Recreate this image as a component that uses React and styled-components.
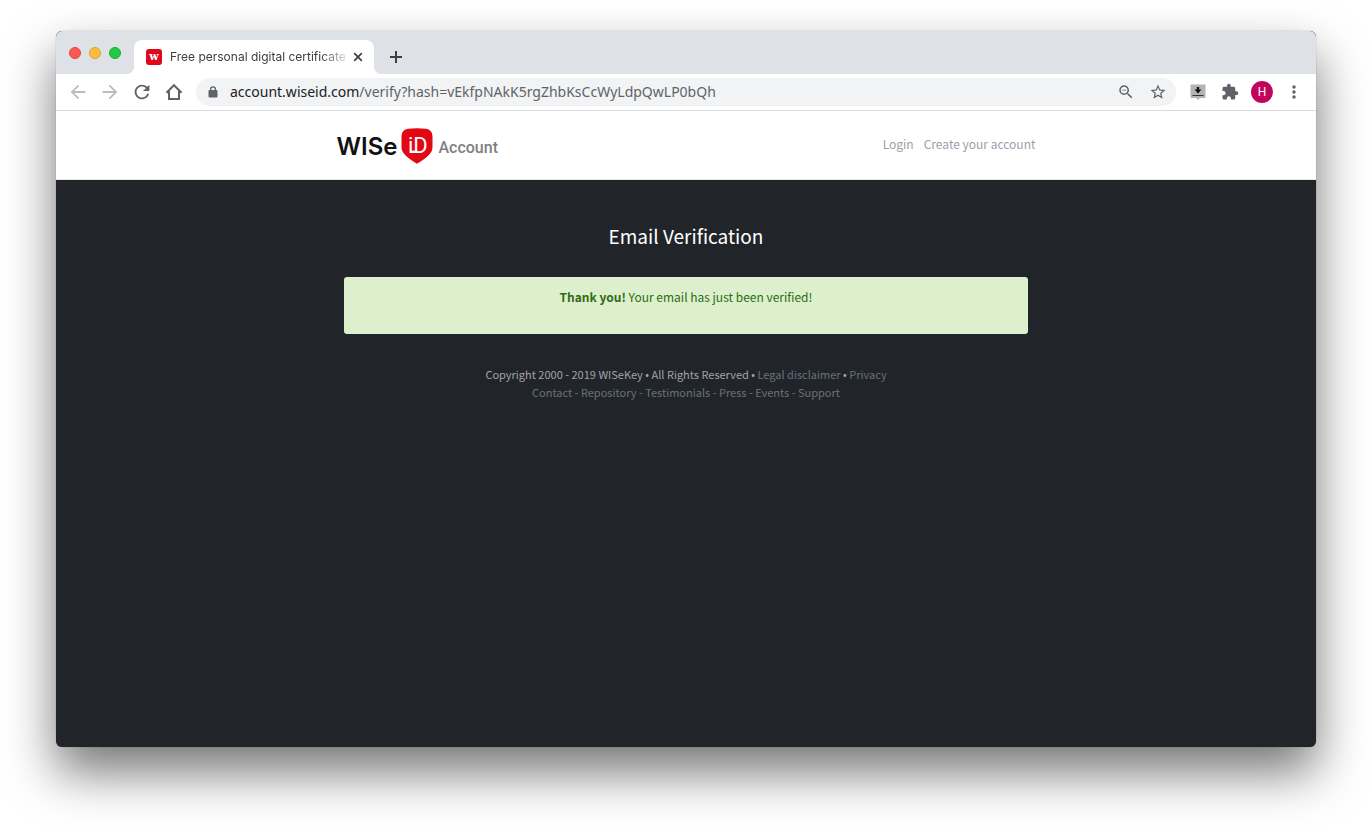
import React from 'react';
import styled, { createGlobalStyle } from 'styled-components';
import {
  MdArrowBack,
  MdArrowForward,
  MdRefresh,
  MdOutlineZoomOut,
  MdStarBorder,
  MdExtension,
  MdMoreVert,
} from 'react-icons/md';

const GlobalStyle = createGlobalStyle`
  * {
    box-sizing: border-box;
  }

  body {
    margin: 0;
    background: #ffffff;
    font-family: 'Noto Sans CJK JP', 'Noto Sans', sans-serif;
  }

  a {
    text-decoration: none;
  }
`;

const Button = styled.button`
  padding: 0;
  border: none;
  background: none;
  cursor: pointer;
`;

const Desktop = styled.div`
  display: flex;
  min-height: 100vh;
  padding: 31px 56px 80px;
  overflow: hidden;
`;

const Window = styled.div`
  display: flex;
  flex-direction: column;
  flex: 1;
  min-width: 0;
  border-radius: 6px;
  background: #212529;
  box-shadow: 0 0 1px rgba(0, 0, 0, 0.5), 0 25px 50px rgba(0, 0, 0, 0.54);
`;

const TabStrip = styled.div`
  display: flex;
  align-items: flex-end;
  height: 43px;
  padding-left: 13px;
  border-radius: 6px 6px 0 0;
  background: #dee1e6;
`;

const WindowControls = styled.div`
  display: flex;
  gap: 8px;
  margin-right: 13px;
  padding-bottom: 15px;
`;

const Light = styled(Button)`
  width: 12px;
  height: 12px;
  border: 1px solid ${({ $edge }) => $edge};
  border-radius: 50%;
  background: ${({ $color }) => $color};
`;

const Tab = styled.div`
  position: relative;
  display: flex;
  align-items: center;
  width: 240px;
  height: 34px;
  padding: 0 9px 0 12px;
  border-radius: 8px 8px 0 0;
  background: #ffffff;

  &::before,
  &::after {
    content: '';
    position: absolute;
    bottom: 0;
    width: 8px;
    height: 8px;
  }

  &::before {
    left: -8px;
    background: radial-gradient(circle at 0 0, transparent 8px, #ffffff 8px);
  }

  &::after {
    right: -8px;
    background: radial-gradient(circle at 100% 0, transparent 8px, #ffffff 8px);
  }
`;

const Favicon = styled.span`
  width: 16px;
  height: 16px;
  margin-right: 8px;
  border-radius: 3px;
  background: #e2061c;
  color: #ffffff;
  font-family: 'DejaVu Serif', serif;
  font-size: 11px;
  font-weight: 700;
  line-height: 15px;
  text-align: center;
`;

const TabTitle = styled.span`
  flex: 1;
  min-width: 0;
  color: #3c4043;
  font-family: Inter, sans-serif;
  font-size: 12px;
  line-height: 18px;
  white-space: nowrap;
  mask-image: linear-gradient(to right, #000 85%, rgba(0, 0, 0, 0.15));
`;

const TabButton = styled(Button)`
  display: flex;
  margin-left: 4px;
  color: #3c4043;
`;

const NewTabButton = styled(TabButton)`
  margin-left: 13px;
  padding-bottom: 8px;
`;

const Toolbar = styled.div`
  display: flex;
  align-items: center;
  height: 37px;
  padding: 0 12px;
  border-bottom: 1px solid #d9dadc;
  background: #ffffff;
`;

const ToolButtons = styled.div`
  display: flex;
  align-items: center;
  gap: 12px;
`;

const ToolButton = styled(Button)`
  display: flex;
  justify-content: center;
  width: 20px;
  color: ${({ disabled }) => (disabled ? '#babcbe' : '#5f6368')};

  & > svg {
    flex-shrink: 0;
  }
`;

const AddressBar = styled.div`
  display: flex;
  align-items: center;
  flex: 1;
  gap: 12px;
  height: 28px;
  margin: 0 12px;
  padding: 0 8px 0 12px;
  border-radius: 14px;
  background: #f1f3f4;
  color: #5f6368;
`;

const Url = styled.div`
  flex: 1;
  color: #5f6368;
  font-family: 'Noto Sans', sans-serif;
  font-size: 14px;
  line-height: 20px;

  & > span {
    color: #202124;
  }
`;

const Avatar = styled(Button)`
  width: 22px;
  height: 22px;
  margin: 0 -1px;
  border-radius: 50%;
  background: #c2055c;
  color: #ffffff;
  font-family: Roboto, sans-serif;
  font-size: 12px;
  line-height: 22px;
`;

const Header = styled.header`
  height: 69px;
  border-bottom: 1px solid #e4e6e8;
  background: #ffffff;
`;

const HeaderInner = styled.div`
  display: flex;
  align-items: center;
  justify-content: space-between;
  max-width: 699px;
  height: 100%;
  margin: 0 auto;
`;

const Brand = styled.a`
  display: flex;
  align-items: center;
  gap: 4px;
  padding-top: 2px;
  color: #111111;
`;

const BrandName = styled.span`
  padding-top: 2px;
  font-family: Inter, sans-serif;
  font-size: 24px;
  font-weight: 600;
  line-height: 30px;
`;

const BrandSection = styled.span`
  padding: 4px 0 0 1px;
  color: #808080;
  font-family: Roboto, sans-serif;
  font-size: 16px;
  font-weight: 500;
  line-height: 20px;
`;

const Nav = styled.nav`
  display: flex;
  gap: 10px;
  padding-bottom: 2px;

  & > a {
    color: #9a9fac;
    font-size: 12px;
    line-height: 20px;
  }
`;

const Content = styled.main`
  width: 100%;
  max-width: 684px;
  margin: 0 auto;
  padding-top: 40px;
  text-align: center;
`;

const Title = styled.h1`
  margin: 0 0 26px;
  color: #ffffff;
  font-size: 19px;
  font-weight: 400;
  line-height: 31px;
`;

const Alert = styled.div`
  height: 57px;
  padding-top: 10px;
  border-radius: 3px;
  background: #dcf0ce;
  color: #316b12;
  font-size: 12px;
  line-height: 20px;

  & > strong {
    font-weight: 700;
  }
`;

const Footer = styled.footer`
  padding-top: 31px;
  color: #a0a4ab;
  font-size: 11px;
  line-height: 18px;
  text-align: center;

  a,
  p + p {
    color: #6a7080;
  }

  p {
    margin: 0;
  }
`;

const links = ['Contact', 'Repository', 'Testimonials', 'Press', 'Events', 'Support'];

function Shield() {
  return (
    <svg width="32" height="36" viewBox="0 0 32 36" aria-hidden="true">
      <path
        d="M7 0.8Q16 -0.2 25 0.8Q31 1.5 31.5 8V19C31.5 26 25 30 16 35.8C7 30 0.5 26 0.5 19V8Q1 1.5 7 0.8Z"
        fill="#e30613"
      />
      <text x="7" y="25" fill="#ffffff" fontFamily="Roboto, sans-serif" fontSize="22">
        iD
      </text>
      <path d="M9 23.8H15" stroke="#ffffff" strokeWidth="2.4" />
    </svg>
  );
}

function CloseIcon() {
  return (
    <svg width="14" height="14" viewBox="0 0 14 14" stroke="currentColor" strokeWidth="1.7" aria-hidden="true">
      <path d="M3.2 3.2L10.8 10.8M10.8 3.2L3.2 10.8" />
    </svg>
  );
}

function PlusIcon() {
  return (
    <svg width="18" height="18" viewBox="0 0 18 18" stroke="currentColor" strokeWidth="2" aria-hidden="true">
      <path d="M9 3V15M3 9H15" />
    </svg>
  );
}

function HomeIcon() {
  return (
    <svg width="18" height="18" viewBox="0 0 18 18" fill="none" stroke="currentColor" strokeWidth="2" aria-hidden="true">
      <path d="M1.5 9.7L9 2.2L16.5 9.7" />
      <path d="M4 8V16H14V8" />
      <path d="M2 9H5M13 9H16" />
    </svg>
  );
}

function LockIcon() {
  return (
    <svg width="10" height="12" viewBox="0 0 10 12" aria-hidden="true">
      <rect x="0.5" y="4" width="9" height="7.5" rx="1" fill="currentColor" />
      <path d="M2.6 4.5V3.2A2.4 2.4 0 0 1 7.4 3.2V4.5" fill="none" stroke="currentColor" strokeWidth="1.3" />
    </svg>
  );
}

function DownloadIcon() {
  return (
    <svg width="16" height="16" viewBox="0 0 16 16" aria-hidden="true">
      <path d="M0.5 0.5H15.5V14H10L8 16L6 14H0.5Z" fill="#b4b4b4" />
      <path d="M6.8 3H9.2V5.5H11.5L8 9.5L4.5 5.5H6.8Z" fill="#111111" />
      <path d="M2.5 11.5H13.5" stroke="#333333" />
    </svg>
  );
}

function BrowserChrome() {
  return (
    <>
      <TabStrip>
        <WindowControls>
          <Light aria-label="Close window" $color="#fc5753" $edge="#df4744" />
          <Light aria-label="Minimize window" $color="#fdbc40" $edge="#de9f34" />
          <Light aria-label="Zoom window" $color="#22c948" $edge="#1aab29" />
        </WindowControls>
        <Tab>
          <Favicon>w</Favicon>
          <TabTitle>Free personal digital certificate</TabTitle>
          <TabButton aria-label="Close tab">
            <CloseIcon />
          </TabButton>
        </Tab>
        <NewTabButton aria-label="New tab">
          <PlusIcon />
        </NewTabButton>
      </TabStrip>
      <Toolbar>
        <ToolButtons>
          <ToolButton aria-label="Back" disabled>
            <MdArrowBack size="22" />
          </ToolButton>
          <ToolButton aria-label="Forward" disabled>
            <MdArrowForward size="22" />
          </ToolButton>
          <ToolButton aria-label="Reload">
            <MdRefresh size="22" />
          </ToolButton>
          <ToolButton aria-label="Home">
            <HomeIcon />
          </ToolButton>
        </ToolButtons>
        <AddressBar>
          <LockIcon />
          <Url>
            <span>account.wiseid.com</span>/verify?hash=vEkfpNAkK5rgZhbKsCcWyLdpQwLP0bQh
          </Url>
          <ToolButton aria-label="Zoom out">
            <MdOutlineZoomOut size="18" />
          </ToolButton>
          <ToolButton aria-label="Bookmark this page">
            <MdStarBorder size="18" />
          </ToolButton>
        </AddressBar>
        <ToolButtons>
          <ToolButton aria-label="Downloads">
            <DownloadIcon />
          </ToolButton>
          <ToolButton aria-label="Extensions">
            <MdExtension size="18" />
          </ToolButton>
          <Avatar aria-label="Profile">H</Avatar>
          <ToolButton aria-label="Menu">
            <MdMoreVert size="20" />
          </ToolButton>
        </ToolButtons>
      </Toolbar>
    </>
  );
}

function App() {
  return (
    <Desktop>
      <GlobalStyle />
      <Window>
        <BrowserChrome />
        <Header>
          <HeaderInner>
            <Brand href="#">
              <BrandName>WISe</BrandName>
              <Shield />
              <BrandSection>Account</BrandSection>
            </Brand>
            <Nav>
              <a href="#login">Login</a>
              <a href="#create">Create your account</a>
            </Nav>
          </HeaderInner>
        </Header>
        <Content>
          <Title>Email Verification</Title>
          <Alert role="status">
            <strong>Thank you!</strong> Your email has just been verified!
          </Alert>
        </Content>
        <Footer>
          <p>
            Copyright 2000 - 2019 WISeKey • All Rights Reserved •{' '}
            <a href="#legal">Legal disclaimer</a> • <a href="#privacy">Privacy</a>
          </p>
          <p>
            {links.map((name, index) => (
              <React.Fragment key={name}>
                {index > 0 && ' - '}
                <a href={`#${name.toLowerCase()}`}>{name}</a>
              </React.Fragment>
            ))}
          </p>
        </Footer>
      </Window>
    </Desktop>
  );
}

export default App;
